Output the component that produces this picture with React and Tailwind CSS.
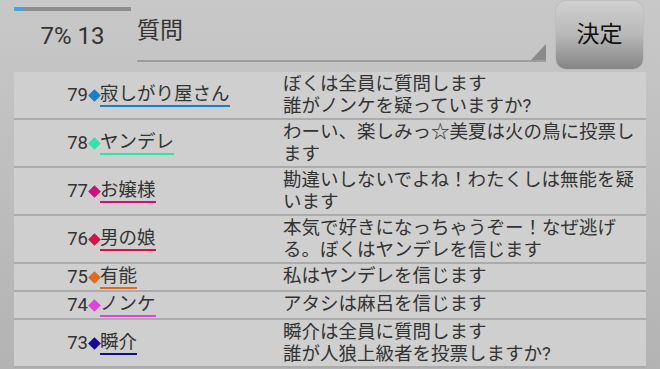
import React from 'react';

const rows = [
  { no: 79, name: '寂しがり屋さん', color: '#1b7fc6', msg: ['ぼくは全員に質問します', '誰がノンケを疑っていますか?'] },
  { no: 78, name: 'ヤンデレ', color: '#2fe3a9', msg: ['わーい、楽しみっ☆美夏は火の鳥に投票します'] },
  { no: 77, name: 'お嬢様', color: '#c9137c', msg: ['勘違いしないでよね！わたくしは無能を疑います'] },
  { no: 76, name: '男の娘', color: '#d4114c', msg: ['本気で好きになっちゃうぞー！なぜ逃げる。ぼくはヤンデレを信じます'] },
  { no: 75, name: '有能', color: '#e06a1e', msg: ['私はヤンデレを信じます'] },
  { no: 74, name: 'ノンケ', color: '#e043dc', msg: ['アタシは麻呂を信じます'] },
  { no: 73, name: '瞬介', color: '#170a95', msg: ['瞬介は全員に質問します', '誰が人狼上級者を投票しますか?'] },
];

const font = { fontFamily: 'Roboto, "Noto Sans CJK JP", sans-serif' };

const LogRow = ({ row }) => (
  <div className="flex border-b-2 border-[#ababab] pt-[1px] pb-[1px]">
    <div className="flex w-[269px] shrink-0 items-center">
      <span className="w-[74px] text-right text-[18.5px] leading-[22px] text-[#333]">{row.no}</span>
      <span className="flex w-[12px] justify-center">
        <span className="block h-[9px] w-[9px] rotate-45" style={{ backgroundColor: row.color }} />
      </span>
      <span
        className="border-b-2 text-[18.5px] leading-[22px] text-[#333]"
        style={{ borderColor: row.color }}
      >
        {row.name}
      </span>
    </div>
    <div className="w-[360px] text-[18.5px] leading-[22px] text-[#333]">
      {row.msg.map((m, i) => (
        <div key={i}>{m}</div>
      ))}
    </div>
  </div>
);

export default function App() {
  return (
    <div
      className="h-[369px] w-[660px] overflow-hidden bg-gradient-to-b from-[#c8c8c8] to-[#b3b3b3]"
      style={font}
    >
      {/* header */}
      <div className="flex h-[72px] items-start">
        <div className="ml-[14px] flex w-[117px] flex-col">
          <div className="mt-[7px] h-[4px] bg-[#8e8e8e]">
            <div className="h-full w-[9px] bg-[#3aa9dd]" />
          </div>
          <div className="mt-[11px] text-center text-[24px] leading-[28px] text-[#333]">7% 13</div>
        </div>
        <div className="relative ml-[6px] h-[62px] w-[409px] border-b-2 border-[#9c9c9c]">
          <div className="mt-[18px] text-[23px] leading-[26px] text-[#333]">質問</div>
          <svg className="absolute right-0 bottom-0" width="15" height="16" viewBox="0 0 15 16">
            <polygon points="15,0 15,16 0,16" fill="#8a8a8a" />
          </svg>
        </div>
        <button className="ml-[10px] mt-[1px] flex h-[68px] w-[87px] items-center justify-center rounded-[10px] bg-gradient-to-b from-[#d0d0d0] via-[#b8b8b8] to-[#858585] text-[23px] text-[#111] shadow-[0_0_2px_rgba(0,0,0,0.15)]">
          決定
        </button>
      </div>

      {/* log list */}
      <div className="ml-[14px] w-[632px] bg-[#cfcfcf]">
        {rows.map((r) => (
          <LogRow key={r.no} row={r} />
        ))}
      </div>
    </div>
  );
}
